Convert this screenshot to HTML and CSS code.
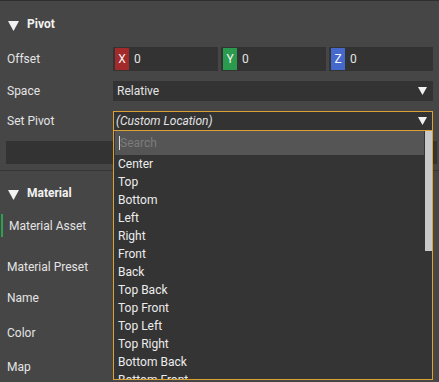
FILE: index.html
```html
<!DOCTYPE html>
<html lang="en">
<head>
  <meta charset="UTF-8">
  <title>Inspector</title>
  <link rel="stylesheet" href="styles.css">
</head>
<body>

<div class="panel">
  <div class="section-head pivot-head">
    <svg class="caret" width="11" height="10" viewBox="0 0 11 10"><polygon points="0,0 11,0 5.5,10" fill="#f2f2f2"/></svg>
    <span>Pivot</span>
  </div>

  <div class="row row-offset">
    <label class="lbl">Offset</label>
    <div class="vec">
      <div class="num"><span class="axis ax-x">X</span><span class="val">0</span></div>
      <div class="num"><span class="axis ax-y">Y</span><span class="val">0</span></div>
      <div class="num"><span class="axis ax-z">Z</span><span class="val">0</span></div>
    </div>
  </div>

  <div class="row row-space">
    <label class="lbl">Space</label>
    <div class="select">
      <span>Relative</span>
      <svg class="arrow" width="9" height="8" viewBox="0 0 9 8"><polygon points="0,0 9,0 4.5,8" fill="#f2f2f2"/></svg>
    </div>
  </div>

  <div class="row row-set">
    <label class="lbl">Set Pivot</label>
    <div class="select-wrap">
      <div class="select open">
        <span class="custom">(Custom Location)</span>
        <svg class="arrow" width="9" height="8" viewBox="0 0 9 8"><polygon points="0,0 9,0 4.5,8" fill="#f2f2f2"/></svg>
      </div>

      <!-- menu ouvert -->
      <div class="menu">
        <div class="menu-top">
          <div class="search"><span class="cursor"></span><span class="ph">Search</span></div>
          <div class="scroll"></div>
        </div>
        <ul class="options">
          <li>Center</li>
          <li>Top</li>
          <li>Bottom</li>
          <li>Left</li>
          <li>Right</li>
          <li>Front</li>
          <li>Back</li>
          <li>Top Back</li>
          <li>Top Front</li>
          <li>Top Left</li>
          <li>Top Right</li>
          <li>Bottom Back</li>
          <li>Bottom Front</li>
        </ul>
      </div>
    </div>
  </div>

  <div class="bar"></div>
  <div class="sep"></div>

  <div class="section-head mat-head">
    <svg class="caret" width="11" height="10" viewBox="0 0 11 10"><polygon points="0,0 11,0 5.5,10" fill="#f2f2f2"/></svg>
    <span>Material</span>
  </div>

  <div class="row mat-asset"><label class="lbl">Material Asset</label></div>
  <div class="row mat-preset"><label class="lbl">Material Preset</label></div>
  <div class="row mat-name"><label class="lbl">Name</label></div>
  <div class="row mat-color"><label class="lbl">Color</label></div>
  <div class="row mat-map"><label class="lbl">Map</label></div>
</div>

</body>
</html>
```

FILE: styles.css
```css
body {
  margin: 0;
  background: #464646;
  font-family: Roboto, "Liberation Sans", sans-serif;
  font-size: 12px;
  color: #e4e4e4;
  overflow: hidden;
}
.panel {
  border-top: 1px solid #2e2e2e;
  height: 381px;
}
.section-head {
  display: flex;
  align-items: center;
  padding-left: 8px;
  font-weight: bold;
  color: #f2f2f2;
}
.section-head .caret {
  margin-right: 8px;
  margin-top: 4px;
}
.pivot-head {
  height: 46px;
}
.mat-head {
  height: 43px;
}
.row {
  display: flex;
  align-items: center;
  padding-left: 7px;
}
.lbl {
  width: 106px;
  flex-shrink: 0;
}
.row-offset {
  height: 24px;
  margin-bottom: 10px;
}
.vec {
  display: flex;
  gap: 3px;
}
.num {
  width: 105px;
  height: 24px;
  background: #333333;
  display: flex;
  align-items: center;
}
.num:last-child {
  width: 104px;
}
.axis {
  width: 14px;
  height: 22px;
  margin-left: 2px;
  display: flex;
  align-items: center;
  justify-content: center;
  color: #f4f4f4;
}
.ax-x { background: #a32a2a; }
.ax-y { background: #2a9a4e; }
.ax-z { background: #4468cc; }
.val {
  margin-left: 5px;
}
.row-space {
  height: 20px;
  margin-bottom: 10px;
}
.select {
  width: 320px;
  height: 20px;
  box-sizing: border-box;
  background: #333333;
  display: flex;
  align-items: center;
  justify-content: space-between;
  padding: 0 6px 0 4px;
}
.row-set {
  height: 20px;
  margin-bottom: 10px;
}
.select-wrap {
  position: relative;
}
.select.open {
  border: 1px solid #dda032;
  padding-left: 2px;
  padding-right: 5px;
}
.custom {
  font-style: italic;
}
.menu {
  position: absolute;
  top: 20px;
  left: 0;
  width: 320px;
  height: 249px;
  box-sizing: border-box;
  background: #343434;
  border: 1px solid #dda032;
  border-top: none;
  overflow: hidden;
  z-index: 5;
}
.menu-top {
  display: flex;
  height: 24px;
}
.search {
  width: 309px;
  margin-left: 1px;
  background: #555555;
  display: flex;
  align-items: center;
  padding-left: 4px;
  box-sizing: border-box;
}
.cursor {
  width: 1px;
  height: 14px;
  background: #dddddd;
}
.ph {
  color: #7c7c7c;
}
.scroll {
  width: 7px;
  height: 120px;
  margin-left: 1px;
  background: #c9c9c9;
}
.options {
  list-style: none;
  margin: 0;
  padding: 0 0 0 4px;
}
.options li {
  height: 18px;
  line-height: 18px;
  color: #ececec;
}
.bar {
  height: 23px;
  margin: 0 2px 0 6px;
  background: #333333;
}
.sep {
  height: 1px;
  margin-top: 6px;
  background: #363636;
}
.mat-asset {
  height: 23px;
  border-left: 2px solid #2ea052;
  padding-left: 6px;
  margin-left: 1px;
}
.mat-preset {
  height: 24px;
  margin-top: 18px;
}
.mat-name {
  height: 24px;
  margin-top: 7px;
}
.mat-color {
  height: 24px;
  margin-top: 11px;
}
.mat-map {
  height: 24px;
  margin-top: 10px;
}
```
